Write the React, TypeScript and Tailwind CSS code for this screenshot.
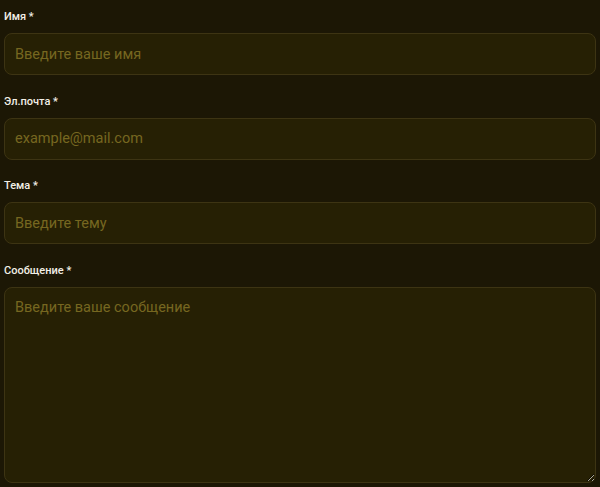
const fields = [
  { label: 'Имя', placeholder: 'Введите ваше имя', type: 'text' },
  { label: 'Эл.почта', placeholder: 'example@mail.com', type: 'email' },
  { label: 'Тема', placeholder: 'Введите тему', type: 'text' },
];

const inputClass =
  'w-full rounded-lg border border-[#3d3413] bg-[#262004] px-[10px] text-[14.5px] text-[#d8c98a] outline-none placeholder:text-[#766720]';

export default function App() {
  return (
    <div className="min-h-screen bg-[#1c1705] px-1 pt-[9px] pb-[5px] font-['Roboto','Noto_Sans',sans-serif]">
      <form className="flex flex-col gap-[18.5px]">
        {fields.map((f) => (
          <div key={f.label} className="flex flex-col">
            <label className="mb-2 text-[11px] leading-4 font-medium text-[#f2efe6]">
              {f.label} *
            </label>
            <input type={f.type} placeholder={f.placeholder} className={`${inputClass} h-[42px]`} />
          </div>
        ))}
        <div className="flex flex-col">
          <label className="mb-2 text-[11px] leading-4 font-medium text-[#f2efe6]">Сообщение *</label>
          <textarea placeholder="Введите ваше сообщение" className={`${inputClass} h-[196px] py-[9px] block`} />
        </div>
      </form>
    </div>
  );
}
